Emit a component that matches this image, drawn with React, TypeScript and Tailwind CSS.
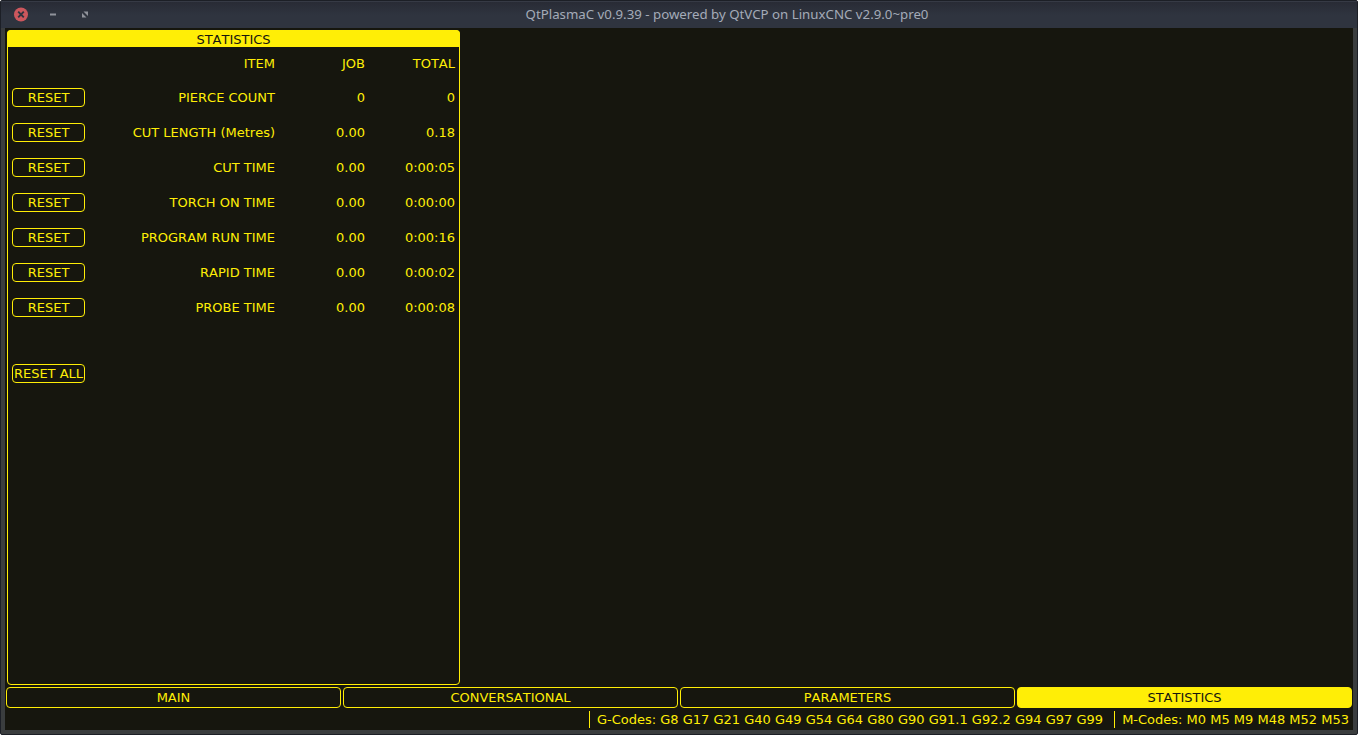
const rows = [
  { item: "PIERCE COUNT", job: "0", total: "0" },
  { item: "CUT LENGTH (Metres)", job: "0.00", total: "0.18" },
  { item: "CUT TIME", job: "0.00", total: "0:00:05" },
  { item: "TORCH ON TIME", job: "0.00", total: "0:00:00" },
  { item: "PROGRAM RUN TIME", job: "0.00", total: "0:00:16" },
  { item: "RAPID TIME", job: "0.00", total: "0:00:02" },
  { item: "PROBE TIME", job: "0.00", total: "0:00:08" },
];

const tabs = ["MAIN", "CONVERSATIONAL", "PARAMETERS", "STATISTICS"];

function ResetButton({ label }: { label: string }) {
  return (
    <button className="flex h-[19px] w-[73px] items-center justify-center rounded-[4px] border border-[#ffee06] leading-[17px] whitespace-nowrap">
      {label}
    </button>
  );
}

function TitleBar() {
  return (
    <header className="flex h-[27px] shrink-0 items-center border-t border-[#363a45] bg-linear-to-b from-[#282b35] to-[#2f343f] to-50%">
      <div className="flex w-[120px] items-center">
        <svg className="ml-[12px]" width="16" height="16" viewBox="0 0 16 16">
          <circle cx="8" cy="7.5" r="7" fill="#cc575d" />
          <path d="M5.2 4.7l5.6 5.6M10.8 4.7l-5.6 5.6" stroke="#2f343f" strokeWidth="1.9" />
        </svg>
        <svg className="ml-[16px]" width="16" height="16" viewBox="0 0 16 16">
          <path d="M5 6.5h6v2H5z" fill="#90939b" />
        </svg>
        <svg className="ml-[16px]" width="16" height="16" viewBox="0 0 16 16">
          <path d="M6.5 4.5H11V9zM5 6l4.5 4.5H5z" fill="#90939b" />
        </svg>
      </div>
      <h1 className="w-[1212px] pb-[3px] text-center font-['Noto_Sans',sans-serif] text-[13.28px] leading-[18px] text-[#a4abb8]">
        QtPlasmaC v0.9.39 - powered by QtVCP on LinuxCNC v2.9.0~pre0
      </h1>
    </header>
  );
}

function StatisticsPanel() {
  return (
    <section className="flex h-[655px] w-[453px] flex-col rounded-[4px] border border-[#ffee06]">
      <h2 className="-mx-px -mt-px h-[17px] rounded-t-[4px] bg-[#ffee06] text-center leading-[19px] text-[#16160e]">
        STATISTICS
      </h2>
      <div className="grid h-[33px] grid-cols-[77px_190px_90px_90px] items-center text-right">
        <span />
        <span>ITEM</span>
        <span>JOB</span>
        <span>TOTAL</span>
      </div>
      {rows.map((row) => (
        <div key={row.item} className="grid h-[35px] grid-cols-[77px_190px_90px_90px] items-center text-right">
          <div className="pl-1">
            <ResetButton label="RESET" />
          </div>
          <span>{row.item}</span>
          <span>{row.job}</span>
          <span>{row.total}</span>
        </div>
      ))}
      <div className="mt-[39px] pl-1">
        <ResetButton label="RESET ALL" />
      </div>
    </section>
  );
}

export default function App() {
  return (
    <div className="h-[735px] w-[1358px] bg-white">
      <div className="flex h-full flex-col overflow-hidden rounded-[2px] border border-[#1c1f26] bg-[#3a3d3e]">
        <TitleBar />
        <main className="mx-1 flex h-[702px] flex-col bg-[#16160e] font-['DejaVu_Sans',sans-serif] text-[13px] leading-[17px] text-[#ffee06] [font-kerning:none]">
          <div className="h-[659px] pt-[2px] pl-[2px]">
            <StatisticsPanel />
          </div>
          <nav className="flex h-[21px] gap-[2px] px-px">
            {tabs.map((tab) => (
              <button
                key={tab}
                className={
                  "h-[21px] w-[335px] rounded-[4px] border border-[#ffee06] leading-[19px] " +
                  (tab === "STATISTICS" ? "bg-[#ffee06] text-[#16160e]" : "")
                }
              >
                {tab}
              </button>
            ))}
          </nav>
          <footer className="flex h-[22px] items-start justify-end pt-[3px] pr-1 whitespace-nowrap">
            <span className="mr-[11px] h-[17px] border-l border-[#ffee06] pl-[7px]">
              G-Codes: G8 G17 G21 G40 G49 G54 G64 G80 G90 G91.1 G92.2 G94 G97 G99
            </span>
            <span className="h-[17px] border-l border-[#ffee06] pl-[7px]">M-Codes: M0 M5 M9 M48 M52 M53</span>
          </footer>
        </main>
      </div>
    </div>
  );
}
